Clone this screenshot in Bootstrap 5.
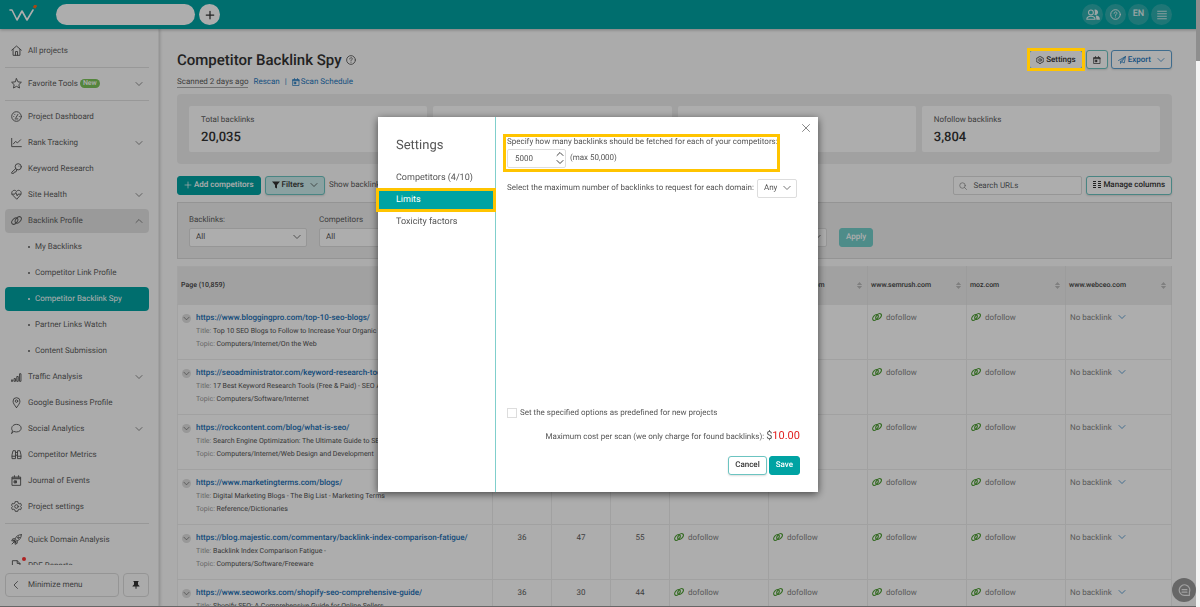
<!DOCTYPE html>
<html lang="en">
<head>
<meta charset="utf-8">
<meta name="viewport" content="width=device-width, initial-scale=1">
<title>Competitor Backlink Spy</title>
<link rel="stylesheet" href="https://cdn.jsdelivr.net/npm/bootstrap@5.3.0/dist/css/bootstrap.min.css">
<style>
:root { --teal: #00a3a3; --hl: #ffc400; }
html, body { height: 100%; }
body { font-family: Roboto, "Liberation Sans", sans-serif; font-size: 8px; line-height: 12px; color: #5c5c5c; background: #fcfcfc; overflow: hidden; text-rendering: geometricPrecision; }
button, input, select { text-rendering: inherit; }
a { text-decoration: none; }
svg { display: block; flex: none; fill: none; stroke: currentColor; stroke-width: 1.4; stroke-linecap: round; stroke-linejoin: round; }
.solid { fill: currentColor; stroke: none; }
.i7 { width: 7px; height: 7px; } .i8 { width: 8px; height: 8px; } .i10 { width: 10px; height: 10px; } .i11 { width: 11px; height: 11px; }
.bold-icon { stroke-width: 2; }
.btn { --bs-btn-font-size: 8px; --bs-btn-line-height: 12px; --bs-btn-padding-x: 6px; --bs-btn-padding-y: 3px; --bs-btn-border-radius: 3px; --bs-btn-font-weight: 500; display: inline-flex; align-items: center; justify-content: center; gap: 2px; height: 19px; white-space: nowrap; }
.btn-line { color: #333; border-color: #6cc4c1; background: #fff; box-shadow: 0 1px 2px #0002; }
.btn-line.blue { color: #1f78be; border-color: #5e9fd0; }
.btn-fill { color: #fff; background: var(--teal); border-color: var(--teal); }
.form-control, .form-select { font-size: 8px; line-height: 12px; padding: 2px 6px; height: 19px; border-radius: 2px; border-color: #ddd; color: #555; min-height: 0; }
.form-select { background-size: 8px 8px; background-position: right 5px center; background-image: url("data:image/svg+xml,%3csvg xmlns='http://www.w3.org/2000/svg' viewBox='0 0 16 16'%3e%3cpath fill='none' stroke='%23777' stroke-width='2' d='m1 4 7 7 7-7'/%3e%3c/svg%3e"); }

.topbar { height: 30px; background: var(--teal); padding: 1px 28px 0 9px; box-shadow: 0 1px 3px #0004; position: relative; z-index: 2; }
.logo { width: 28px; height: 20px; stroke-width: 1.6; }
.project-pick { width: 139px; height: 21px; border-radius: 11px; border: 0; background: #fff; margin-left: 19px; }
.round { width: 21px; height: 21px; border-radius: 50%; border: 0; padding: 0; display: flex; align-items: center; justify-content: center; }
.round-white { background: #fff; color: #333; margin-left: 4px; }
.round-dim { background: #2fafaf; color: #e4f4f4; font-size: 9px; line-height: 21px; font-weight: 500; }
.top-tools { gap: 2px; }
.users { width: 14px; height: 11px; stroke-width: 1.6; }

.app-body { min-height: 0; }
.side { width: 159px; flex: none; background: #fdfdfd; border-right: 1px solid #ececec; box-shadow: 1px 0 3px #0003; padding: 9px 9px 10px 5px; }
.side-list { flex: 1 1 0; min-height: 0; overflow: hidden; }
.side-link { display: flex; align-items: center; height: 24px; margin: 1px 0; padding: 0 6px; border-radius: 4px; color: #5c5c5c; flex: none; }
.side-link > svg:first-child { margin-right: 6px; }
.side-link.open { background: #e4e4e4; }
.side-link.sub { padding-left: 23px; }
.side-link.sub::before { content: ""; width: 2px; height: 2px; border-radius: 50%; background: currentColor; margin-right: 5px; }
.side-link.on { background: var(--teal); color: #fff; }
.rule { border-top: 1px solid #e0e0e0; margin: 3px 0; }
.new-tag { background: #7cc45a; color: #fff; border-radius: 6px; font-size: 7px; line-height: 9px; padding: 0 3px; margin-left: 2px; font-weight: 500; }
.side-btn { height: 24px; border: 1px solid #dcdcdc; border-radius: 4px; background: #fdfdfd; color: #5c5c5c; display: flex; align-items: center; }
.side-btn .i8 { color: #333; }
.alert-dot { position: absolute; left: 17px; top: 3px; width: 4px; height: 4px; border-radius: 50%; background: #f33; }

.content { padding: 20px 28px 0 18px; min-width: 0; overflow: hidden; }
.page-title { font-size: 15px; line-height: 22px; font-weight: 500; color: #333; }
.title-tools { gap: 3px; }
.blue { color: #1f78be; }
.scan-line { margin-top: 6px; gap: 5px; line-height: 10px; }
.scan-line a { gap: 1px; }
.scan-date { border-bottom: 1px solid #aaa; }
.stats { background: #eee; border-radius: 4px; padding: 12px; margin-top: 6px; gap: 6px; }
.stat { background: #fff; border-radius: 2px; padding: 8px 12px 5px; }
.stat-num { font-size: 13px; line-height: 19px; margin-top: 2px; font-weight: 500; color: #333; }
.tools { margin-top: 12px; gap: 4px; }
.filter-btn { background: #cdeeed; }
.search svg { position: absolute; left: 6px; top: 6px; color: #888; }
.search .form-control { width: 129px; padding-left: 19px; }
.filters { background: #efefef; border: 1px solid #dadada; padding: 11px; margin-top: 7px; }
.filters label { margin-bottom: 2px; display: block; }
.filter-grid { width: 638px; gap: 12px; }
.filter-grid > div { width: 20%; align-self: flex-end; }
.apply { margin-left: 12px; background: #73cfcb; border-color: #73cfcb; }
.links { table-layout: fixed; margin-top: 7px; border: 1px solid #f0f0f0; background: #fff; width: 100%; }
.links th { height: 38px; background: #eee; font-size: 7px; font-weight: 500; color: #444; padding: 0 4px 0 3px; vertical-align: middle; border-right: 1px solid #e6e6e6; }
.links td { height: 55px; border: solid #ededed; border-width: 1px 1px 0 0; vertical-align: top; padding: 6px 4px 0; color: #858585; line-height: 13px; }
.links td.num { text-align: center; color: #5c5c5c; }
.c-num { width: 59px; } .c-site { width: 99px; } .c-last { width: 106px; }
.sorter { color: #bbb; margin-top: 3px; }
.url { color: #1a6fb5; font-weight: 500; display: block; line-height: 14px; }
.meta { font-size: 7px; line-height: 13px; white-space: nowrap; overflow: hidden; color: #505050; }
.meta span { color: #999; }
.knob { width: 9px; height: 9px; border-radius: 50%; background: #e0e0e0; display: flex; align-items: center; justify-content: center; flex: none; margin: 3px 5px 0 0; border: 0; padding: 0; color: #555; }
.green { color: #4f9f35; stroke-width: 1.8; }
.no-link { gap: 6px; }

.shade { position: fixed; inset: 0 4px 0 0; padding-top: 2px; background: rgba(0,0,0,.32); border-bottom: 1px solid #666; z-index: 10; }
.ring { position: relative; }
.ring::after { content: ""; position: absolute; inset: -2px; border: 3px solid var(--hl); z-index: 11; pointer-events: none; }
.dialog { width: 440px; min-height: 375px; background: #fff; box-shadow: 0 2px 8px #0009; color: #555; }
.tabs { width: 118px; border-right: 1px solid #80cfcc; padding-top: 19px; flex: none; }
.dialog-title { font-size: 13px; line-height: 20px; padding-left: 18px; margin-bottom: 11px; font-weight: 400; }
.tab-link { display: block; font-size: 9px; line-height: 22px; padding-left: 18px; color: #555; }
.tab-link.on { background: var(--teal); color: #fff; }
.tab-link.on::after { inset: -1px -1px -1px -2px; }
.pane { padding: 19px 18px 17px 11px; }
.limit-box label { margin-bottom: 1px; }
.spin-box { width: 59px; }
.spin-box .form-control { padding-left: 7px; }
.spin-btn { border: 0; background: none; padding: 0; color: #444; }
.close-x { position: absolute; right: 8px; top: 7px; color: #888; }
.spinners { position: absolute; right: 2px; top: 1px; display: flex; flex-direction: column; }
.limit-box::after { inset: -2px 20px -4px -4px; }
.any-row { margin-top: 11px; }
.any-row .form-select { width: 40px; margin-left: 3px; }
.form-check-input.tick[type=checkbox] { width: 10px; height: 10px; margin: 0 3px 0 0; border-radius: 0; border-color: #ddd; }
.cost { margin-top: 9px; line-height: 18px; }
.price { font-size: 11px; line-height: 12px; }
.price-red { color: #e02020; }
.actions { gap: 2px; margin-top: 10px; }
.scroll-track { position: fixed; inset: 0 0 0 auto; width: 4px; background: #f4f4f4; z-index: 12; }
.scroll-thumb { height: 61px; background: #8e8e8e; }
.chat { position: absolute; right: 4px; bottom: 5px; width: 24px; height: 24px; background: #999; color: #eee; border: 0; }
</style>
</head>
<body>
<svg width="0" height="0" class="position-absolute" aria-hidden="true">
  <symbol id="down" viewBox="0 0 16 16"><path d="m2 5 6 6 6-6"/></symbol>
  <symbol id="up" viewBox="0 0 16 16"><path d="m2 11 6-6 6 6"/></symbol>
  <symbol id="home" viewBox="0 0 16 16"><path d="m1 7.500 7-6 7 6M3 6.500V15h10V6.500M6.500 15V9.500h3V15"/></symbol>
  <symbol id="star" viewBox="0 0 16 16"><path d="m8 1 2.100 4.600 5 .6-3.700 3.400 1 5L8 12.100l-4.400 2.500 1-5L.9 6.200l5-.6z"/></symbol>
  <symbol id="gauge" viewBox="0 0 16 16"><circle cx="8" cy="8" r="7"/><path d="m7 10 3-5M4 8h.1M5.500 5h.1M12 8h.1M6 11.500h4"/></symbol>
  <symbol id="chart" viewBox="0 0 16 16"><path d="M1 2v12h14M3.500 10l3-3.500 3 2L14 4"/></symbol>
  <symbol id="key" viewBox="0 0 16 16"><circle cx="10.500" cy="5.500" r="4.500"/><path d="m7 8-6 5.500V15h3l1-2h2l1.500-3M11.500 4.500h.1"/></symbol>
  <symbol id="heart" viewBox="0 0 16 16"><path d="M8 14.500 1.700 8C-.8 4 4.500-.5 8 3.500c3.500-4 8.800.5 6.300 4.500zM1.500 7.500h4L7 5l2 5 1.200-2.500h4"/></symbol>
  <symbol id="link" viewBox="0 0 16 16"><ellipse cx="5.500" cy="8.800" rx="3.400" ry="5.400" transform="rotate(42 5.500 8.800)"/><ellipse cx="10.500" cy="7.200" rx="3.400" ry="5.400" transform="rotate(42 10.500 7.200)"/></symbol>
  <symbol id="bars" viewBox="0 0 16 16"><path d="M1 13h1.500v2H1zM5 11h1.500v4H5zM9 8h1.500v7H9zM13 4h1.500v11H13z"/></symbol>
  <symbol id="pin" viewBox="0 0 16 16"><path d="M8 15.500C5 11.500 3 9 3 6a5 5 0 0 1 10 0c0 3-2 5.500-5 9.500z"/><circle cx="8" cy="6" r="1.800"/></symbol>
  <symbol id="talk" viewBox="0 0 16 16"><path d="M1 15l1.200-3.500C-1 7 2.500 2 8 2c9 0 9 11 0 11-1.500 0-2.500-.2-3.500-.6z"/></symbol>
  <symbol id="bino" viewBox="0 0 16 16"><path d="M3.500 2.500h3V14h-5V9zM12.500 2.500h-3V14h5V9zM6.500 5h3M6.500 9h3M1.500 10.500h5M9.500 10.500h5"/></symbol>
  <symbol id="cal" viewBox="0 0 16 16"><path d="M2 3h12v12H2zM2 5.500h12M2 4.500h12M5 1v2M11 1v2"/><path d="M5 8.500h3v3H5z" fill="currentColor"/></symbol>
  <symbol id="gear" viewBox="0 0 16 16"><path d="m6.200 1-.5 2-1.700 1-2-.6L.8 6.200 2.400 8 .8 9.800 2 12.600l2-.6 1.700 1 .5 2h3.600l.5-2 1.700-1 2 .6 1.200-2.800L13.600 8l1.600-1.800L14 3.400l-2 .6-1.700-1-.5-2z"/><circle cx="8" cy="8" r="2.600"/></symbol>
  <symbol id="rocket" viewBox="0 0 16 16"><path d="M15 1c-5 0-7.500 2.500-9 6L9 10c3.500-1.500 6-4 6-9zM6 7H2.500L1 10h3.500M9 10v3.500L6 15v-3.500M4 12l-2.500 2.500"/><circle cx="10.700" cy="5.300" r="1.200"/><path d="m4.500 9.500 2 2" stroke-width="3"/></symbol>
  <symbol id="doc" viewBox="0 0 16 16"><path d="M2 15V1h7l4 4v10zM9 1v4h4"/></symbol>
  <symbol id="help" viewBox="0 0 16 16"><circle cx="8" cy="8" r="7"/><path d="M6 6.300C6 3.500 10.200 3.600 10 6.200 9.900 7.600 8 7.600 8 9.300M8 11.600v.1"/></symbol>
  <symbol id="plus" viewBox="0 0 16 16"><path d="M8 2v12M2 8h12"/></symbol>
  <symbol id="sort" viewBox="0 0 16 16"><path class="solid" d="M2 7l6-7 6 7zM2 9l6 7 6-7z"/></symbol>
</svg>

<div class="d-flex flex-column h-100">
  <header class="topbar d-flex align-items-center">
    <svg class="logo text-white" viewBox="0 0 28 20" aria-label="WebCEO"><path d="M1 5h2l5 10 5-9 5 9 6-10"/><path d="m25 3 2-3" stroke="#f26b21" stroke-width="3" stroke-linecap="butt"/></svg>
    <input class="project-pick" aria-label="Project">
    <button class="round round-white" aria-label="Add project"><svg class="i10 bold-icon"><use href="#plus"/></svg></button>
    <div class="ms-auto d-flex top-tools">
      <button class="round round-dim" aria-label="Users"><svg class="users" viewBox="0 0 20 16"><circle cx="7" cy="5" r="3.500"/><path d="M1 15c0-6 12-6 12 0z"/><path class="solid" d="M12 1a4 4 0 1 1 0 7.500c1-2 1-5.500 0-7.500zM15 15.500h5c0-4-2-6-6-6z"/></svg></button>
      <button class="round round-dim" aria-label="Help"><svg class="i11"><use href="#help"/></svg></button>
      <button class="round round-dim">EN</button>
      <button class="round round-dim" aria-label="Menu"><svg class="i10" viewBox="0 0 16 16"><path d="M1 2h14M1 6h14M1 10h14M1 14h14"/></svg></button>
    </div>
  </header>

  <div class="d-flex flex-grow-1 app-body">
    <nav class="side d-flex flex-column">
      <div class="side-list d-flex flex-column">
        <a class="side-link" href="#"><svg class="i11"><use href="#home"/></svg>All projects</a>
        <div class="rule"></div>
        <a class="side-link" href="#"><svg class="i11"><use href="#star"/></svg>Favorite Tools<span class="new-tag">New</span><svg class="i8 ms-auto"><use href="#down"/></svg></a>
        <div class="rule"></div>
        <a class="side-link" href="#"><svg class="i11"><use href="#gauge"/></svg>Project Dashboard</a>
        <a class="side-link" href="#"><svg class="i11"><use href="#chart"/></svg>Rank Tracking<svg class="i8 ms-auto"><use href="#down"/></svg></a>
        <a class="side-link" href="#"><svg class="i11"><use href="#key"/></svg>Keyword Research</a>
        <a class="side-link" href="#"><svg class="i11"><use href="#heart"/></svg>Site Health<svg class="i8 ms-auto"><use href="#down"/></svg></a>
        <a class="side-link open" href="#"><svg class="i11"><use href="#link"/></svg>Backlink Profile<svg class="i8 ms-auto"><use href="#up"/></svg></a>
        <a class="side-link sub" href="#">My Backlinks</a>
        <a class="side-link sub" href="#">Competitor Link Profile</a>
        <a class="side-link sub on" href="#">Competitor Backlink Spy</a>
        <a class="side-link sub" href="#">Partner Links Watch</a>
        <a class="side-link sub" href="#">Content Submission</a>
        <a class="side-link" href="#"><svg class="i11"><use href="#bars"/></svg>Traffic Analysis<svg class="i8 ms-auto"><use href="#down"/></svg></a>
        <a class="side-link" href="#"><svg class="i11"><use href="#pin"/></svg>Google Business Profile</a>
        <a class="side-link" href="#"><svg class="i11"><use href="#talk"/></svg>Social Analytics<svg class="i8 ms-auto"><use href="#down"/></svg></a>
        <a class="side-link" href="#"><svg class="i11"><use href="#bino"/></svg>Competitor Metrics</a>
        <a class="side-link" href="#"><svg class="i11"><use href="#cal"/></svg>Journal of Events</a>
        <a class="side-link" href="#"><svg class="i11"><use href="#gear"/></svg>Project settings</a>
        <div class="rule"></div>
        <a class="side-link" href="#"><svg class="i11"><use href="#rocket"/></svg>Quick Domain Analysis</a>
        <a class="side-link position-relative" href="#"><svg class="i11"><use href="#doc"/></svg>PDF Reports<span class="alert-dot"></span></a>
      </div>
      <div class="d-flex gap-1 pt-2">
        <button class="side-btn flex-grow-1"><svg class="i8" viewBox="0 0 16 16"><path d="M11 1 4 8l7 7"/></svg><span class="ps-2">Minimize menu</span></button>
        <button class="side-btn px-2" aria-label="Pin menu"><svg class="i8" viewBox="0 0 16 16"><path class="solid" d="M3 0h10v2h-1v5l3 3v1H9v4l-1 1-1-1v-4H1v-1l3-3V2H3z"/></svg></button>
      </div>
    </nav>

    <main class="content flex-grow-1">
      <div class="d-flex align-items-center">
        <h1 class="page-title m-0">Competitor Backlink Spy</h1>
        <svg class="i10 ms-1"><use href="#help"/></svg>
        <div class="ms-auto d-flex title-tools">
          <span class="ring"><button class="btn btn-line"><svg class="i8"><use href="#gear"/></svg>Settings</button></span>
          <button class="btn btn-line" aria-label="Calendar"><svg class="i8"><use href="#cal"/></svg></button>
          <button class="btn btn-line blue"><svg class="i8" viewBox="0 0 16 16"><path d="M1 9 15 1l-2.500 13-5-2.500L15 1 5 10v5l2.500-3.500"/></svg>Export<svg class="i8 ms-1"><use href="#down"/></svg></button>
        </div>
      </div>
      <div class="d-flex align-items-center scan-line">
        <span class="scan-date">Scanned 2 days ago</span>
        <a class="blue" href="#">Rescan</a><span class="blue">|</span>
        <a class="blue d-flex align-items-center" href="#"><svg class="i8"><use href="#cal"/></svg>Scan Schedule</a>
      </div>

      <section class="stats d-flex">
        <div class="stat flex-fill w-25">Total backlinks<div class="stat-num">20,035</div></div>
        <div class="stat flex-fill w-25"></div>
        <div class="stat flex-fill w-25"></div>
        <div class="stat flex-fill w-25">Nofollow backlinks<div class="stat-num">3,804</div></div>
      </section>

      <div class="d-flex align-items-center tools">
        <button class="btn btn-fill"><svg class="i8"><use href="#plus"/></svg>Add competitors</button>
        <button class="btn btn-line filter-btn"><svg class="i8" viewBox="0 0 16 16"><path class="solid" d="M0 1h16l-6 7v7l-4-2V8z"/></svg>Filters<svg class="i8 ms-1"><use href="#down"/></svg></button>
        <span>Show backlink types</span>
        <div class="ms-auto position-relative search">
          <svg class="i8" viewBox="0 0 16 16"><circle cx="7" cy="7" r="5.500"/><path d="m11 11 4 4"/></svg>
          <input class="form-control" placeholder="Search URLs" aria-label="Search URLs">
        </div>
        <button class="btn btn-line"><svg class="i8" viewBox="0 0 8 8" shape-rendering="crispEdges"><path class="solid" d="M0 0h3v1H0zM5 0h3v1H5zM0 2h3v1H0zM5 2h3v1H5zM0 4h3v1H0zM5 4h3v1H5zM0 6h3v1H0zM5 6h3v1H5z"/></svg>Manage columns</button>
      </div>

      <form class="filters d-flex align-items-end">
        <div class="filter-grid d-flex">
          <div class="flex-fill"><label for="f1">Backlinks:</label><select class="form-select" id="f1"><option>All</option></select></div>
          <div class="flex-fill"><label for="f2">Competitors</label><select class="form-select" id="f2"><option>All</option></select></div>
          <div class="flex-fill"><select class="form-select" aria-label="Type"></select></div>
          <div class="flex-fill"><select class="form-select" aria-label="Status"></select></div>
          <div class="flex-fill"><select class="form-select" aria-label="Toxicity"></select></div>
        </div>
        <button type="button" class="btn btn-fill apply">Apply</button>
      </form>

      <table class="links">
        <colgroup><col><col class="c-num"><col class="c-num"><col class="c-num"><col class="c-site"><col class="c-site"><col class="c-site"><col class="c-site"><col class="c-last"></colgroup>
        <thead><tr><th>Page (10,859)</th><th></th><th></th><th></th><th></th>
          <th><div class="d-flex justify-content-between"><span>www.ahrefs.com</span><svg class="i7 sorter"><use href="#sort"/></svg></div></th>
          <th><div class="d-flex justify-content-between"><span>www.semrush.com</span><svg class="i7 sorter"><use href="#sort"/></svg></div></th>
          <th><div class="d-flex justify-content-between"><span>moz.com</span><svg class="i7 sorter"><use href="#sort"/></svg></div></th>
          <th><div class="d-flex justify-content-between"><span>www.webceo.com</span><svg class="i7 sorter"><use href="#sort"/></svg></div></th></tr></thead>
        <tbody id="rows"></tbody>
      </table>
    </main>
  </div>
</div>
<button class="round chat" aria-label="Chat"><svg width="13" height="13" viewBox="0 0 16 16"><path d="M14 14H8a6.500 6.500 0 1 1 6-4zM5 7h6M5 10h6"/></svg></button>

<div class="shade d-flex align-items-center justify-content-center">
  <div class="dialog d-flex position-relative" role="dialog" aria-labelledby="dlg">
    <div class="tabs">
      <h2 class="dialog-title" id="dlg">Settings</h2>
      <a class="tab-link" href="#">Competitors (4/10)</a>
      <a class="tab-link on ring" href="#">Limits</a>
      <a class="tab-link" href="#">Toxicity factors</a>
    </div>
    <div class="pane d-flex flex-column flex-grow-1">
      <button class="spin-btn close-x" aria-label="Close"><svg class="i8 bold-icon" viewBox="0 0 16 16"><path d="m1 1 14 14M15 1 1 15"/></svg></button>
      <div class="ring limit-box">
        <label for="max" class="d-block">Specify how many backlinks should be fetched for each of your competitors:</label>
        <div class="d-flex align-items-center gap-1">
          <div class="spin-box position-relative"><input class="form-control" id="max" value="5000">
            <div class="spinners"><button class="spin-btn" aria-label="More"><svg class="i8 bold-icon"><use href="#up"/></svg></button><button class="spin-btn" aria-label="Less"><svg class="i8 bold-icon"><use href="#down"/></svg></button></div></div>
          <span>(max 50,000)</span>
        </div>
      </div>
      <div class="d-flex align-items-center any-row">
        <label for="any">Select the maximum number of backlinks to request for each domain:</label>
        <select class="form-select" id="any"><option>Any</option></select>
      </div>
      <div class="mt-auto d-flex align-items-center">
        <input type="checkbox" class="form-check-input tick" id="pre"><label for="pre">Set the specified options as predefined for new projects</label>
      </div>
      <div class="text-end cost">Maximum cost per scan (we only charge for found backlinks): <span class="price">$<span class="price-red">10.00</span></span></div>
      <div class="d-flex justify-content-end actions">
        <button class="btn btn-line">Cancel</button><button class="btn btn-fill">Save</button>
      </div>
    </div>
  </div>
</div>
<div class="scroll-track"><div class="scroll-thumb"></div></div>
<script src="https://cdn.jsdelivr.net/npm/bootstrap@5.3.0/dist/js/bootstrap.bundle.min.js"></script>
<script>
const pages = [
  ["https://www.bloggingpro.com/top-10-seo-blogs/", "Top 10 SEO Blogs to Follow to Increase Your Organic Traffic", "Computers/Internet/On the Web", "", "", ""],
  ["https://seoadministrator.com/keyword-research-tools/", "17 Best Keyword Research Tools (Free & Paid) - SEO Administrator", "Computers/Software/Internet", "", "", ""],
  ["https://rockcontent.com/blog/what-is-seo/", "Search Engine Optimization: The Ultimate Guide to SEO", "Computers/Internet/Web Design and Development", "", "", ""],
  ["https://www.marketingterms.com/blogs/", "Digital Marketing Blogs - The Big List - Marketing Terms", "Reference/Dictionaries", "", "", ""],
  ["https://blog.majestic.com/commentary/backlink-index-comparison-fatigue/", "Backlink Index Comparison Fatigue -", "Computers/Software/Freeware", 36, 47, 55],
  ["https://www.seoworks.com/shopify-seo-comprehensive-guide/", "Shopify SEO: A Comprehensive Guide for Online Sellers", "Computers/Internet", 36, 30, 44]
];
const follow = '<td><div class="d-flex align-items-center gap-1"><svg class="i10 green"><use href="#link"/></svg>dofollow</div></td>';
document.getElementById("rows").innerHTML = pages.map(([url, title, topic, a, b, c]) => `<tr>
  <td><div class="d-flex"><button class="knob" aria-label="Expand"><svg class="i7"><use href="#down"/></svg></button><div class="overflow-hidden">
    <a class="url" href="#">${url}</a><div class="meta"><span>Title:</span> ${title.replace("&", "&amp;")}</div><div class="meta"><span>Topic:</span> ${topic}</div></div></div></td>
  <td class="num">${a}</td><td class="num">${b}</td><td class="num">${c}</td>${follow.repeat(4)}
  <td><div class="d-flex align-items-center no-link">No backlink<svg class="i8 blue"><use href="#down"/></svg></div></td></tr>`).join("");
</script>
</body>
</html>
